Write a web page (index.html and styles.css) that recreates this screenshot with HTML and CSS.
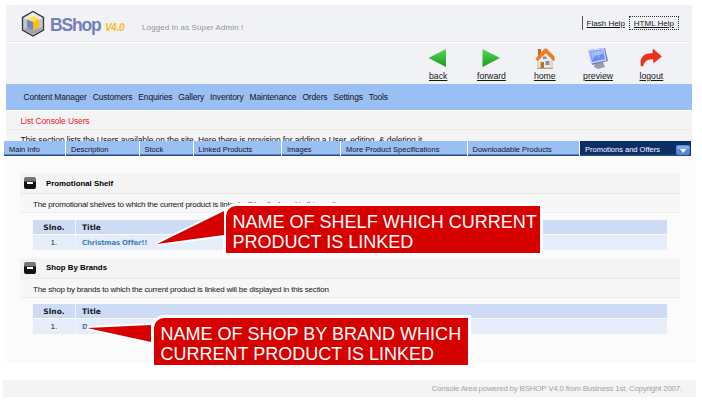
FILE: index.html
```html
<!DOCTYPE html>
<html lang="en">
<head>
<meta charset="utf-8">
<title>BShop V4.0 Console</title>
<link rel="stylesheet" href="styles.css">
</head>
<body>
<header class="top">
  <div class="brandbar">
    <svg class="logo" width="24" height="28" viewBox="0 0 24 28">
      <path d="M12 1.5 22.5 7.5V20L12 26 1.5 20V7.500Z" fill="#c5c6ca" stroke="#34343a" stroke-width="1.3"/>
      <path d="M12 2.500 21.500 8 12 13 3 8Z" fill="#ececee"/>
      <path d="M3 19.500 8 16.500 13 20 21 17V19.500L12 25Z" fill="#a4a5aa"/>
      <path d="M6 9.500 12 6.500 18 9 12 12Z" fill="#ffe52b"/>
      <path d="M12 12 18 9V17L12 20.500Z" fill="#f8bd10"/>
      <path d="M6 9.500 12 12V20.500L6 17Z" fill="#7384cc"/>
    </svg>
    <h1 class="brand">BShop</h1>
    <span class="version">V4.0</span>
    <span class="login">Logged in as Super Admin !</span>
    <div class="help"><a class="flash">Flash Help</a><a class="htmlhelp">HTML Help</a></div>
  </div>
  <div class="toolbar">
    <a class="tool"><svg width="22" height="22" viewBox="0 0 22 22"><defs><linearGradient id="g" x2="0" y2="1"><stop stop-color="#58d84f"/><stop offset="1" stop-color="#179b22"/></linearGradient></defs><path d="M1.500 11 19 2V20Z" fill="url(#g)"/></svg><span>back</span></a>
    <a class="tool"><svg width="22" height="22" viewBox="0 0 22 22"><path d="M20 11 2.500 2V20Z" fill="url(#g)"/></svg><span>forward</span></a>
    <a class="tool"><svg width="22" height="22" viewBox="0 0 22 22"><path d="M4 10.500 10.500 5 18 11V21H4Z" fill="#f5ead2" stroke="#bda789" stroke-width=".7"/><path d="M4 9V2H7V6" fill="#c9641c"/><path d="M2 12 9 3.500 12 1.500 20 9.500V14L12 5.500 4 13.500Z" fill="#f47d20" stroke="#cf5d16" stroke-width=".6"/><path d="M6.500 15H10V21H6.500Z" fill="#b5762d"/><path d="M11.500 14H15.500V18H11.500ZM9 9.500H12.500V12H9Z" fill="#718fd1"/><path d="M3 21.500H19" stroke="#a4a59c"/></svg><span>home</span></a>
    <a class="tool"><svg width="24" height="22" viewBox="0 0 24 22"><path d="M9 16 17 15 19 20 12 22 8 20Z" fill="#989daf"/><path d="M2 3 19 1 22 14 6 18Z" fill="#727dac"/><path d="M2 3 18 1 20.500 13.500 5 16.500Z" fill="#c9d5fc"/><path d="M3.300 4.200 17 2.500 19 12.300 6 15Z" fill="#6e8df1"/><path d="M4 5 17 3 17.500 6Q8 7 6.500 13Z" fill="#9db7ff"/><path d="M12 4 13 10M9 8 17 6" stroke="#c7d7ff" stroke-width=".8"/></svg><span>preview</span></a>
    <a class="tool"><svg width="24" height="22" viewBox="0 0 24 22"><path d="M2 19Q0 6 14 6.500V2L22.500 9.500 14.500 16V12Q6 11 3.800 19Z" fill="#ee301d" stroke="#d02614" stroke-width=".5"/></svg><span>logout</span></a>
  </div>
</header>
<nav class="nav"><a>Content Manager</a><a>Customers</a><a>Enquiries</a><a>Gallery</a><a>Inventory</a><a>Maintenance</a><a>Orders</a><a>Settings</a><a>Tools</a></nav>
<section class="intro">
  <h2 class="intro-title">List Console Users</h2>
  <p class="intro-text">This section lists the Users available on the site. Here there is provision for adding a User, editing, &amp; deleting it</p>
</section>
<div class="tabs"><a>Main Info</a><a>Description</a><a>Stock</a><a>Linked Products</a><a>Images</a><a>More Product Specifications</a><a>Downloadable Products</a><a class="active">Promotions and Offers<svg class="drop" width="14" height="10" viewBox="0 0 14 10"><rect width="14" height="10" rx="2" fill="#5488d4"/><path d="M1 1H13V4H1Z" fill="#83acea"/><path d="M4 4H10.500L7.200 8Z" fill="#fff"/></svg></a></div>
<main class="content">
  <section class="panel">
    <h3 class="panel-head"><i class="minus"></i><span>Promotional Shelf</span></h3>
    <p class="desc">The promotional shelves to which the current product is linked will be displayed in this section</p>
    <div class="grid"><b class="num">Slno.</b><b>Title</b><span class="num">1.</span><a>Christmas Offer!!</a></div>
    <div class="callout shelf">
      <svg class="tail" width="72" height="38" viewBox="0 0 72 38"><path d="M3 36 70 3V27Z" fill="#d70000" stroke="#fff" stroke-width="4" paint-order="stroke"/></svg>
      <span>NAME OF SHELF WHICH CURRENT</span><span>PRODUCT IS LINKED</span>
    </div>
  </section>
  <section class="panel">
    <h3 class="panel-head"><i class="minus"></i><span>Shop By Brands</span></h3>
    <p class="desc">The shop by brands to which the current product is linked will be displayed in this section</p>
    <div class="grid"><b class="num">Slno.</b><b>Title</b><span class="num">1.</span><a>D</a></div>
    <div class="callout brands">
      <svg class="tail" width="72" height="26" viewBox="0 0 72 26"><path d="M4 6 68 3V20Z" fill="#d70000" stroke="#fff" stroke-width="4" paint-order="stroke"/></svg>
      <span>NAME OF SHOP BY BRAND WHICH</span><span>CURRENT PRODUCT IS LINKED</span>
    </div>
  </section>
</main>
<footer class="footer"><span>Console Area powered by BSHOP V4.0 from Business 1st. Copyright 2007.</span></footer>
</body>
</html>
```
FILE: styles.css
```css
* { box-sizing: border-box; }
body { margin: 0; padding-top: 5px; width: 702px; height: 400px; overflow: hidden; background: #fff; color: #151515; font: 8px/10px "Liberation Sans", Arial, sans-serif; white-space: nowrap; }
h1, h2, h3, p { margin: 0; }
.top { margin-left: 6px; width: 686px; height: 79px; background: #f1f2f6; }
.brandbar { height: 38px; display: flex; border-bottom: 1px solid #fcfcfd; box-shadow: inset 0 -1px #e7e8ed; }
.logo { margin: 5px 0 0 15px; }
.brand { margin: 9px 0 0 5px; width: 55px; font-size: 17.500px; line-height: 22px; color: #7480b9; letter-spacing: -1.200px; }
.version { width: 37px; padding-top: 17px; font: italic bold 10px/11px "Liberation Sans", sans-serif; letter-spacing: -.3px; color: #ffb91b; }
.login { margin-top: 18px; color: #92939a; letter-spacing: .12px; }
.help { margin: 11px 13px 0 auto; display: flex; text-decoration: underline; }
.help a { height: 14px; padding: 3px 3px 0; }
.help .flash { border-left: 1px solid #555; padding: 3px 4px 0 3.500px; }
.help .htmlhelp { border: 1px dotted #333; padding: 2px 4px 0; }
.toolbar { height: 41px; display: flex; justify-content: flex-end; padding: 4px 14px 0 0; font-size: 8.700px; }
.tool { width: 53.300px; display: flex; flex-direction: column; align-items: center; text-decoration: underline; }
.tool svg { flex: none; }
.tool span { margin-top: 2px; }
.nav { margin-left: 6px; width: 686px; height: 26px; display: flex; gap: 6px; padding: 8px 17.500px; background: #99bff5; font-size: 8.500px; letter-spacing: -.165px; }
.intro { margin: 1px 0 0 6px; width: 686px; height: 30px; overflow: hidden; background: #f4f4f4; }
.intro-title { height: 19px; padding: 5px 0 0 14.500px; border-bottom: 1px solid #e9e9e9; font-size: 8.500px; line-height: 10px; font-weight: 400; letter-spacing: -.13px; color: #e91732; }
.intro-text { padding: 5px 0 0 14.500px; font-size: 8.500px; letter-spacing: -.11px; }
.tabs { margin-left: 4px; width: 687px; height: 15px; display: grid; grid-template-columns: 62px 73.500px 54px 88.500px 59px 126.500px 112.500px 111px; font-size: 7.500px; }
.tabs a { padding: 4px 0 0 5px; border-right: 1px solid #fff; background: #99bff5; box-shadow: inset 0 -1.500px #294a7c; }
.tabs .active { display: flex; background: #0b2e69; color: #fff; border: 0; }
.drop { margin: 0 1px 0 auto; }
.content { margin: 0 0 0 4px; width: 692px; height: 206px; padding: 17px 16px 0; background: #fbfbfb; }
.panel { position: relative; height: 84.500px; width: 660px; }
.panel-head { height: 21px; display: flex; align-items: center; padding-left: 4px; background: #f4f4f4; border-bottom: 1px solid #e8e8e8; font-size: 7.850px; line-height: 10px; color: #000; }
.panel-head span { padding-top: 1px; }
.minus { width: 12px; height: 12px; margin-right: 10px; border-radius: 2px; background: linear-gradient(#777 0 30%, #111 45%); display: flex; align-items: center; justify-content: center; }
.minus::before { content: ""; width: 6px; height: 2px; background: #fff; }
.desc { height: 19px; padding: 6px 0 0 13px; background: #f7f7f7; border-bottom: 1px solid #eee; letter-spacing: -.2px; }
.grid { margin: 6.500px 13px 0; display: grid; grid-template-columns: 43px 1fr; grid-template-rows: 14px 15px; row-gap: 1px; }
.grid > * { padding: 3px 0 0 6px; background: #e5edfa; font-size: 7.500px; line-height: 10px; }
.grid b { background: #cddbf4; font-family: "DejaVu Sans", sans-serif; }
.grid .num { padding-left: 0; border-right: 1px solid #f0f4fc; text-align: center; }
.grid a { color: #4580bd; font-family: "DejaVu Sans", sans-serif; font-weight: bold; font-size: 7px; letter-spacing: -.2px; }
.callout { position: absolute; z-index: 2; width: 320px; height: 53px; border: 3.500px solid #fff; border-radius: 13px 0 0 0; background: #d70000; color: #fff; padding: 6px 0 0 7px; font-size: 18.030px; line-height: 20px; }
.callout > span { display: block; }
.shelf { left: 202.500px; top: 30px; }
.brands { left: 130.500px; top: 57.500px; }
.tail { position: absolute; z-index: -1; }
.shelf .tail { left: -72px; top: 2px; }
.brands .tail { left: -71px; top: 4px; }
.footer { margin: 18px 0 0 3px; width: 693px; height: 17px; padding: 4px 14px 0; background: #f4f4f4; color: #a4a4a4; text-align: right; letter-spacing: -.24px; }
```
